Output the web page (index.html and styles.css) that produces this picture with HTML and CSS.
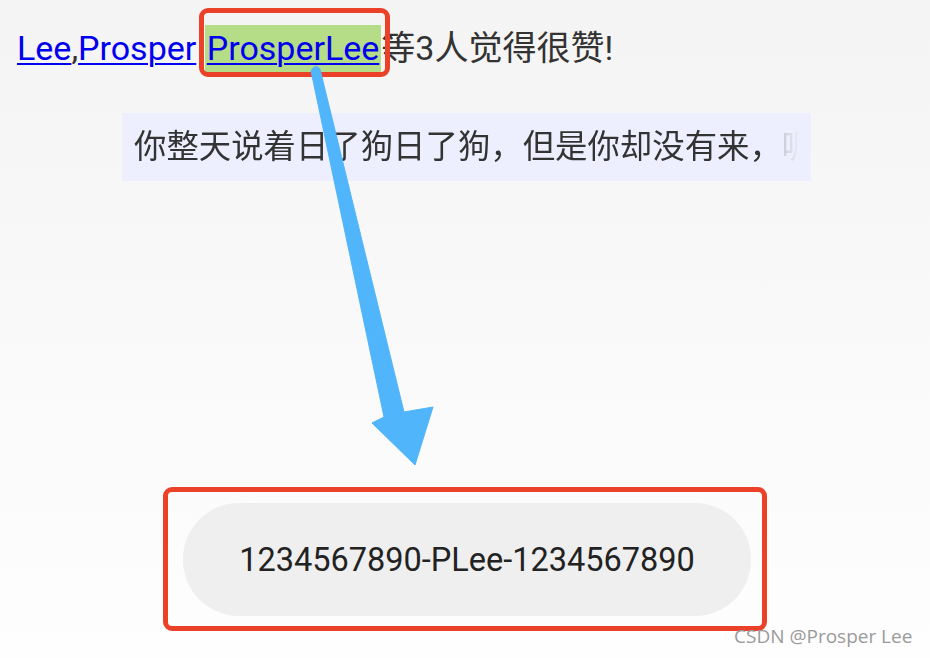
FILE: index.html
```html
<!DOCTYPE html>
<html>
<head>
<meta charset="utf-8">
<link rel="stylesheet" href="styles.css">
</head>
<body>
<div class="screen">
  <p class="likes"><a href="#">Lee</a>,<a href="#">Prosper</a> <a href="#" class="hl">ProsperLee</a>等3人觉得很赞!</p>
  <div class="quote-wrap"><div class="quote"><div class="quote-text">你整天说着日了狗日了狗，但是你却没有来，<span class="fade">呢</span></div></div></div>
  <div class="btn-wrap"><div class="pill">1234567890-PLee-1234567890</div></div>
  <div class="mark mark-top"></div>
  <div class="mark mark-bottom"></div>
  <svg class="arrow" width="930" height="658" viewBox="0 0 930 658">
    <path d="M311 71 Q315 63 320 69 L404 412 L433 407 L415 465 L372 423 L384 417 Z" fill="#51b5fb" stroke="#51b5fb" stroke-width="1" stroke-linejoin="round"/>
  </svg>
  <div class="watermark">CSDN @Prosper Lee</div>
</div>
</body>
</html>
```
FILE: styles.css
```css
html, body { margin: 0; padding: 0; }
body {
  width: 930px;
  height: 658px;
  overflow: hidden;
  font-family: Roboto, "Noto Sans CJK SC", sans-serif;
}
.screen {
  position: relative;
  width: 930px;
  height: 658px;
  background: linear-gradient(#f4f4f4, #fefefe);
  display: flex;
  flex-direction: column;
}
.likes {
  margin: 0;
  padding: 26px 0 0 17px;
  font-size: 34px;
  line-height: 44px;
  height: 44px;
  color: #333;
  white-space: nowrap;
}
.likes a { color: #0000ee; text-decoration: underline; text-decoration-thickness: 2px; text-underline-offset: 3px; }
.likes a.hl { background: #b5dc87; padding: 3px 2px 4px 2px; }
.quote-wrap { display: flex; padding-top: 43px; padding-left: 122px; }
.quote {
  width: 689px;
  height: 68px;
  padding-left: 12px;
  box-sizing: border-box;
  background: #eeeffe;
  display: flex;
}
.quote-text {
  width: 666px;
  color: #333;
  font-size: 32.4px;
  line-height: 68px;
  white-space: nowrap;
  overflow: hidden;
  -webkit-mask-image: linear-gradient(to right, #000 95%, transparent 100%);
  mask-image: linear-gradient(to right, #000 95%, transparent 100%);
}
.fade { color: #aaa; }
.btn-wrap { display: flex; justify-content: center; padding-top: 322px; }
.pill {
  width: 568px;
  height: 113px;
  margin-left: 4px;
  border-radius: 56px;
  background: #efefef;
  color: #222;
  font-size: 32.5px;
  display: flex;
  align-items: center;
  justify-content: center;
}
.mark {
  position: absolute;
  border: 5px solid #ec4129;
  border-radius: 9px;
  box-sizing: border-box;
}
.mark-top { left: 199px; top: 8px; width: 191px; height: 69px; }
.mark-bottom { left: 163px; top: 487px; width: 604px; height: 144px; }
.arrow { position: absolute; left: 0; top: 0; }
.watermark {
  position: absolute;
  left: 734px;
  top: 623px;
  font-family: "Open Sans", sans-serif;
  font-size: 19px;
  color: #9a9a9a;
}
```
